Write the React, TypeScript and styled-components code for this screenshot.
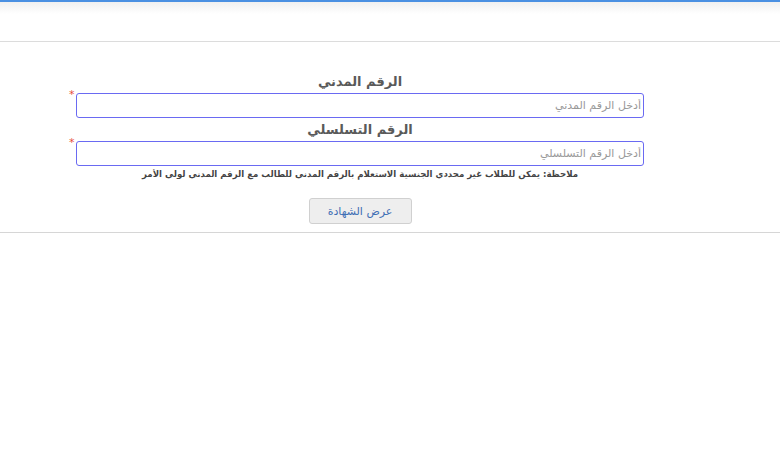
import React from "react"
import styled, { createGlobalStyle } from "styled-components"

const Global = createGlobalStyle`
  body {
    margin: 0;
    background: #fff;
    font-family: "DejaVu Sans", "Noto Sans", sans-serif;
  }
`

const App = () => {
  return (
    <Page dir="rtl">
      <Global />
      <Header />
      <Section>
        <Form>
          <Label>الرقم المدني</Label>
          <Field>
            <Star>*</Star>
            <Input placeholder="أدخل الرقم المدني" />
          </Field>
          <Label>الرقم التسلسلي</Label>
          <Field>
            <Star>*</Star>
            <Input placeholder="أدخل الرقم التسلسلي" />
          </Field>
          <Note>ملاحظة: يمكن للطلاب غير محددي الجنسية الاستعلام بالرقم المدني للطالب مع الرقم المدني لولي الأمر</Note>
          <Button>عرض الشهادة</Button>
        </Form>
      </Section>
    </Page>
  )
}

export default App

const Page = styled.div`
  width: 780px;
  height: 470px;
  background: #fff;
`
const Header = styled.div`
  height: 39px;
  border-top: 2px solid #4a90e2;
  border-bottom: 1px solid #dcdcdc;
  background: linear-gradient(#f0f0f0, #fff 12px);
`
const Section = styled.div`
  padding: 28px 0 8px;
  border-bottom: 1px solid #d6d6d6;
`
const Form = styled.div`
  width: 568px;
  margin-right: 136px;
  display: flex;
  flex-direction: column;
  align-items: center;
`
const Label = styled.div`
  font-size: 13px;
  font-weight: bold;
  color: #5a5a5a;
  line-height: 23px;
`
const Field = styled.div`
  position: relative;
  width: 100%;
`
const Star = styled.span`
  position: absolute;
  left: -7px;
  top: -5px;
  color: #e74c3c;
  font-size: 11px;
`
const Input = styled.input`
  box-sizing: border-box;
  width: 100%;
  height: 25px;
  border: 1px solid #6a6af2;
  border-radius: 3px;
  padding: 0 2px;
  font-family: inherit;
  font-size: 11px;
  direction: rtl;
  outline: none;
  &::placeholder {
    color: #999;
  }
`
const Note = styled.div`
  font-size: 8.6px;
  font-weight: bold;
  color: #444;
  margin-top: 1px;
  line-height: 14px;
`
const Button = styled.button`
  margin-top: 17px;
  width: 103px;
  height: 26px;
  background: #eeeeee;
  border: 1px solid #d0d0d0;
  border-radius: 3px;
  color: #3f6fb5;
  font-family: inherit;
  font-size: 11px;
`
